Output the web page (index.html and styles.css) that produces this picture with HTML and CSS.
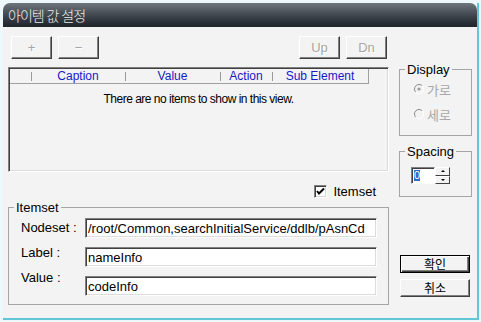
FILE: index.html
```html
<!DOCTYPE html>
<html lang="ko">
<head>
  <meta charset="UTF-8">
  <title>아이템 값 설정</title>
  <link rel="stylesheet" href="styles.css">
</head>
<body>
  <div class="frame">
    <div class="window">
      <div class="titlebar">아이템 값 설정</div>

      <div class="dialog">
        <!-- Colonne principale -->
        <div class="main">
          <div class="toolbar">
            <button class="btn" disabled>+</button>
            <button class="btn" disabled>&minus;</button>
            <span class="spacer"></span>
            <button class="btn" disabled>Up</button>
            <button class="btn" disabled>Dn</button>
          </div>

          <div class="listview">
            <div class="lv-head">
              <span class="col col-idx"></span>
              <span class="col col-caption">Caption</span>
              <span class="col col-value">Value</span>
              <span class="col col-action">Action</span>
              <span class="col col-sub">Sub Element</span>
            </div>
            <div class="lv-empty">There are no items to show in this view.</div>
          </div>

          <div class="check-row">
            <span class="checkbox">
              <svg width="9" height="9" viewBox="0 0 9 9"><path d="M1 4 L3 6.5 L8 1.5" fill="none" stroke="#000" stroke-width="2"/></svg>
            </span>
            <span>Itemset</span>
          </div>

          <div class="group itemset">
            <div class="group-title">Itemset</div>
            <div class="fields">
              <div class="labels">
                <span>Nodeset :</span>
                <span>Label :</span>
                <span>Value :</span>
              </div>
              <div class="inputs">
                <input class="field" type="text" value="/root/Common,searchInitialService/ddlb/pAsnCd">
                <input class="field" type="text" value="nameInfo">
                <input class="field" type="text" value="codeInfo">
              </div>
            </div>
          </div>
        </div>

        <!-- Colonne latérale -->
        <div class="side">
          <div class="group display">
            <div class="group-title">Display</div>
            <div class="radio">
              <svg width="10" height="10" viewBox="0 0 10 10">
                <path d="M8.2 1.8 A4.5 4.5 0 0 0 1.8 8.2" fill="none" stroke="#8a8a8a"/>
                <path d="M1.8 8.2 A4.5 4.5 0 0 0 8.2 1.8" fill="none" stroke="#fff"/>
                <circle cx="5" cy="5" r="1.6" fill="#9a9a9a"/>
              </svg>
              <span>가로</span>
            </div>
            <div class="radio">
              <svg width="10" height="10" viewBox="0 0 10 10">
                <path d="M8.2 1.8 A4.5 4.5 0 0 0 1.8 8.2" fill="none" stroke="#8a8a8a"/>
                <path d="M1.8 8.2 A4.5 4.5 0 0 0 8.2 1.8" fill="none" stroke="#fff"/>
              </svg>
              <span>세로</span>
            </div>
          </div>

          <div class="group spacing">
            <div class="group-title">Spacing</div>
            <div class="spinner">
              <div class="spin-input"><span class="sel">0</span></div>
              <div class="spin-btns">
                <span class="spin-btn"><i class="arrow-up"></i></span>
                <span class="spin-btn"><i class="arrow-down"></i></span>
              </div>
            </div>
          </div>

          <button class="dlg-btn default">확인</button>
          <button class="dlg-btn">취소</button>
        </div>
      </div>
    </div>
  </div>
</body>
</html>
```

FILE: styles.css
```css
/* Reset minimal */
* { box-sizing: border-box; margin: 0; padding: 0; }

body {
  font-family: 'Liberation Sans', Arial, sans-serif;
  font-size: 13px;
  color: #000;
  background: #fff;
}

/* Cadre de la fenêtre */
.frame {
  width: 481px;
  height: 322px;
  padding: 3px 0 0 3px;
  background: #eef8fa;
}
.window {
  width: 476px;
  border-right: 2px solid #63c6d7;
  border-bottom: 2px solid #63c6d7;
}
.titlebar {
  height: 24px;
  padding-left: 5px;
  border-radius: 7px 7px 0 0;
  background: linear-gradient(#6f767d, #454c53 45%, #2a3036 80%, #1f2429);
  color: #ececec;
  font-family: 'Noto Sans CJK KR', sans-serif;
  font-size: 14px;
  font-weight: 300;
  letter-spacing: -1px;
  line-height: 24px;
}

.dialog {
  display: flex;
  gap: 10px;
  height: 291px;
  padding: 9px 5px 0;
  background: #f3f3f3;
}
.main { width: 381px; }
.side { width: 73px; padding-top: 33px; }

/* Boutons */
button {
  font: inherit;
  color: #000;
  background: #f3f3f3;
  border: 1px solid;
  border-color: #fff #404040 #404040 #fff;
  box-shadow: inset -1px -1px #808080;
}
button:disabled {
  color: #a6a6a6;
  text-shadow: 1px 1px #fff;
}

.toolbar {
  display: flex;
  gap: 6px;
  height: 23px;
  padding: 0 2px 0 3px;
}
.toolbar .spacer { flex: 1; }
.btn {
  width: 41px;
  height: 23px;
}

/* Liste */
.listview {
  height: 105px;
  margin-top: 8px;
  padding: 1px;
  border: 1px solid;
  border-color: #808080 #fff #fff #808080;
  box-shadow: inset 1px 1px #404040, inset -1px -1px #dcdcdc;
  font-size: 12px;
}
.lv-head {
  display: flex;
  width: 359px;
  height: 15px;
  line-height: 14px;
  border-right: 1px solid #a0a0a0;
  border-bottom: 1px solid #a0a0a0;
  color: #1818c8;
}
.col {
  text-align: center;
  background: linear-gradient(#9a9a9a, #9a9a9a) no-repeat 0 3px / 1px 9px;
}
.col-idx { width: 21px; background: none; }
.col-caption { width: 94px; }
.col-value { width: 95px; }
.col-action { width: 52px; }
.col-sub { width: 96px; }
.lv-empty {
  padding-top: 8px;
  line-height: 14px;
  letter-spacing: -0.5px;
  text-align: center;
}

/* Case à cocher */
.check-row {
  display: flex;
  justify-content: flex-end;
  align-items: center;
  gap: 6px;
  height: 13px;
  margin-top: 13px;
  padding-right: 13px;
}
.checkbox {
  display: flex;
  align-items: center;
  justify-content: center;
  width: 13px;
  height: 13px;
  background: #fff;
  border: 1px solid;
  border-color: #808080 #fff #fff #808080;
  box-shadow: inset 1px 1px #404040, inset -1px -1px #d4d4d4;
}

/* Groupes */
.group {
  border: 1px solid #a5a5a5;
}
.group-title {
  display: table;
  margin: -7px 0 0 5px;
  padding: 0 2px;
  line-height: 14px;
  background: #f3f3f3;
}

.itemset {
  margin-top: 9px;
  padding-bottom: 8px;
}
.fields {
  display: flex;
  margin: 3px 0 0 12px;
}
.labels {
  display: flex;
  flex-direction: column;
  gap: 11px;
  width: 64px;
  padding-top: 3px;
  line-height: 14px;
}
.inputs {
  display: flex;
  flex-direction: column;
  gap: 9px;
}
.field {
  width: 292px;
  height: 20px;
  padding: 0 2px;
  font: inherit;
  color: #000;
  background: #fff;
  border: 1px solid;
  border-color: #808080 #fff #fff #808080;
  box-shadow: inset 1px 1px #404040, inset -1px -1px #dcdcdc;
  outline: none;
}

/* Affichage */
.display {
  padding-bottom: 14px;
}
.radio {
  display: flex;
  align-items: center;
  gap: 3px;
  height: 14px;
  margin: 5px 0 0 14px;
  color: #a8a8a8;
  font-family: 'Noto Sans CJK KR', sans-serif;
  font-size: 13px;
}
.radio + .radio { margin-top: 11px; }

.spacing {
  margin-top: 15px;
  padding-bottom: 12px;
}
.spinner {
  display: flex;
  height: 17px;
  margin: 8px 0 0 11px;
}
.spin-input {
  width: 24px;
  padding: 2px 0 0 2px;
  background: #fff;
  border: 1px solid;
  border-color: #808080 #fff #fff #808080;
  box-shadow: inset 1px 1px #404040;
}
.sel {
  display: block;
  width: 6px;
  height: 11px;
  background: #316ac5;
  color: #fff;
  font-size: 11px;
  line-height: 11px;
}
.spin-btns {
  display: flex;
  flex-direction: column;
  width: 15px;
}
.spin-btn {
  display: flex;
  align-items: center;
  justify-content: center;
  height: 8.5px;
  background: #f3f3f3;
  border: 1px solid;
  border-color: #fff #404040 #404040 #fff;
}
.arrow-up, .arrow-down {
  width: 0;
  height: 0;
  border-left: 2px solid transparent;
  border-right: 2px solid transparent;
}
.arrow-up { border-bottom: 2px solid #000; }
.arrow-down { border-top: 2px solid #000; }

/* Boutons de validation */
.dlg-btn {
  display: block;
  width: 70px;
  height: 18px;
  margin-left: 1px;
  font-family: 'Noto Sans CJK KR', sans-serif;
  font-size: 12px;
  line-height: 14px;
}
.dlg-btn.default {
  margin-top: 58px;
  border-color: #000;
  box-shadow: inset 1px 1px #fff, inset -1px -1px #404040, inset -2px -2px #808080;
}
.dlg-btn + .dlg-btn { margin-top: 6px; }
```
